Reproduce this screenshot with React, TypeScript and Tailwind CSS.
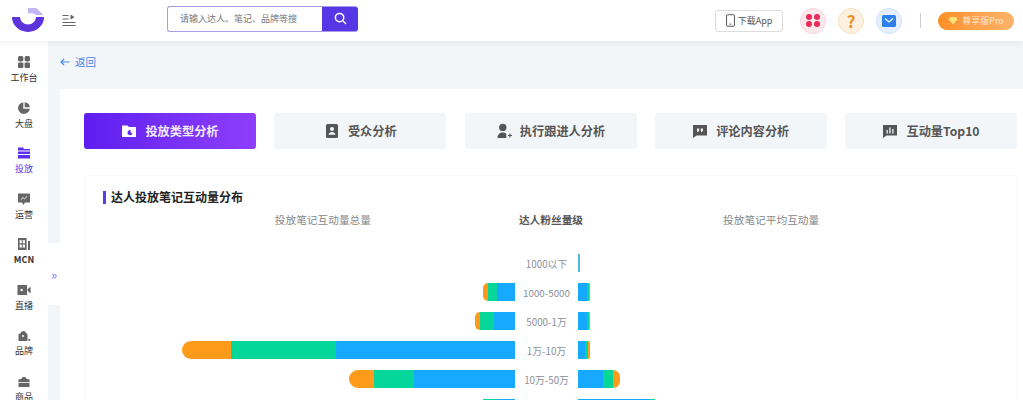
const font = { fontFamily: '"Noto Sans CJK SC", "Noto Sans", sans-serif' }

const navItems = [
  { label: '工作台', icon: 'grid' },
  { label: '大盘', icon: 'pie' },
  { label: '投放', icon: 'folder', active: true },
  { label: '运营', icon: 'chat' },
  { label: 'MCN', icon: 'building' },
  { label: '直播', icon: 'video' },
  { label: '品牌', icon: 'brand' },
  { label: '商品', icon: 'bag' },
]

function NavIcon({ name }: { name: string }) {
  const c = 'w-[14px] h-[14px] fill-[#666]'
  if (name === 'grid')
    return (
      <svg viewBox="0 0 14 14" className={c}>
        <rect x="1" y="1" width="5.4" height="5.4" rx="1.6" />
        <rect x="7.6" y="1" width="5.4" height="5.4" rx="1.6" />
        <rect x="1" y="7.6" width="5.4" height="5.4" rx="1.2" />
        <rect x="7.6" y="7.6" width="5.4" height="5.4" rx="1.2" />
      </svg>
    )
  if (name === 'pie')
    return (
      <svg viewBox="0 0 14 14" className={c}>
        <path d="M6.3 1.2v6.5h6.5A5.9 5.9 0 1 1 6.3 1.2z" />
        <path d="M7.7 1.2a5.6 5.6 0 0 1 5.1 5.1H7.7z" />
      </svg>
    )
  if (name === 'folder')
    return (
      <svg viewBox="0 0 14 14" className="w-[14px] h-[14px] fill-[#5b2df0]">
        <path d="M1 1.500h5l1 1.600h6v1.400H1z" />
        <path d="M1 5.500h12v2.400H1zM1 8.900h12v3.600H1z" />
      </svg>
    )
  if (name === 'chat')
    return (
      <svg viewBox="0 0 14 14" className={c}>
        <path d="M1 1.500h12v9H8L6.500 13 5 10.500H1z" />
        <path d="M3.800 7.600l2.200-2 1.500 1.200 2.600-2.400" fill="none" stroke="#fff" strokeWidth="0.9" />
      </svg>
    )
  if (name === 'building')
    return (
      <svg viewBox="0 0 14 14" className={c}>
        <path d="M1 1h8.600v12H1z" />
        <path d="M11 4h2v9h-2z" />
        <path d="M2.600 3.200h5.400v3H2.600zM2.600 7.400h5.400v3H2.600z" fill="#fff" />
        <path d="M4.800 3.200h1v7.200h-1z" />
      </svg>
    )
  if (name === 'video')
    return (
      <svg viewBox="0 0 14 14" className={c}>
        <path d="M0.500 2h9.500v10H0.500z" />
        <path d="M10.600 6l3-2.200v6.400l-3-2.200z" />
        <circle cx="4.600" cy="7" r="1.300" fill="#fff" />
      </svg>
    )
  if (name === 'brand')
    return (
      <svg viewBox="0 0 14 14" className={c}>
        <path d="M1.500 6.500L3.600 5a3 3 0 0 1 5.600 0l1.300 1.500V13h-9z" />
        <circle cx="12.300" cy="11.800" r="1.100" />
        <circle cx="6" cy="8" r="1" fill="#fff" />
      </svg>
    )
  return (
    <svg viewBox="0 0 14 14" className={c}>
      <path d="M1.500 5.200h2.600a3 3 0 0 1 5.800 0h2.600v7.800h-11z" />
      <path d="M1.500 8h11v.8h-11z" fill="#fff" />
    </svg>
  )
}

function TabIcon({ name, active }: { name: string; active?: boolean }) {
  const c = active ? 'w-[16px] h-[16px] fill-white' : 'w-[16px] h-[16px] fill-[#555]'
  if (name === 'type')
    return (
      <svg viewBox="0 0 16 16" className={c}>
        <path d="M1 2.500h5.500l1.500 1.600h7V14H1z" />
        <path d="M9.700 7a2.600 2.600 0 1 0 1.900 3.400A2.400 2.400 0 0 1 9.700 7z" fill="#6a2cf5" />
      </svg>
    )
  if (name === 'aud')
    return (
      <svg viewBox="0 0 16 16" className={c}>
        <path d="M3.500 1h9A1.500 1.500 0 0 1 14 2.500v11a1.500 1.500 0 0 1-1.500 1.500h-9A1.500 1.500 0 0 1 2 13.500v-11A1.500 1.500 0 0 1 3.500 1z" />
        <circle cx="8" cy="6" r="2" fill="#f3f6f9" />
        <path d="M4.500 11.800c.4-2 1.900-2.800 3.500-2.800s3.100.8 3.500 2.800z" fill="#f3f6f9" />
      </svg>
    )
  if (name === 'person')
    return (
      <svg viewBox="0 0 16 16" className={c}>
        <circle cx="6.800" cy="4.400" r="3.700" />
        <path d="M1.500 15c0-3.600 2.300-5.500 5.300-5.500 1.500 0 2.700.4 3.500 1.200V15z" />
        <path d="M12 12h1.400v-1.400h1.100V12h1.400v1.100h-1.400v1.400h-1.100v-1.400H12z" />
      </svg>
    )
  if (name === 'quote')
    return (
      <svg viewBox="0 0 16 16" className={c}>
        <path d="M1 2h14v10.500H4.500L1 15z" />
        <path d="M5 5.500h2.200v2.300L6 9H5l.6-1.300H5zM8.800 5.500H11v2.300L9.800 9h-1l.6-1.300h-.6z" fill="#f3f6f9" />
      </svg>
    )
  return (
    <svg viewBox="0 0 16 16" className={c}>
      <path d="M1 2h14v10.500H4.500L1 15z" />
      <path d="M4.500 7h1.300v3.500H4.500zM7.300 4.500h1.300v6H7.300zM10.200 6h1.300v4.500h-1.300z" fill="#f3f6f9" />
    </svg>
  )
}

const tabs = [
  { label: '投放类型分析', icon: 'type', active: true },
  { label: '受众分析', icon: 'aud' },
  { label: '执行跟进人分析', icon: 'person' },
  { label: '评论内容分析', icon: 'quote' },
  { label: '互动量Top10', icon: 'bars' },
]

// widths in px: left is orange / green / blue, right is blue / green / orange
const rows = [
  { label: '1000以下', left: [0, 0, 0], right: [2, 0, 0] },
  { label: '1000-5000', left: [5, 9, 18], right: [9, 2, 1] },
  { label: '5000-1万', left: [5, 14, 21], right: [9, 2, 1] },
  { label: '1万-10万', left: [49, 105, 179], right: [7, 3, 2] },
  { label: '10万-50万', left: [25, 40, 101], right: [25, 10, 7] },
  { label: '', left: [0, 14, 18], right: [72, 5, 0] },
]

function Segment({ width, color }: { width: number; color: string }) {
  return <div className={`h-full shrink-0 ${color}`} style={{ width }} />
}

export default function App() {
  return (
    <div className="w-[1023px] h-[400px] overflow-hidden flex flex-col bg-[#f3f6f9] text-[#333]" style={font}>
      {/* Header */}
      <header className="relative z-20 h-[41px] shrink-0 bg-white shadow-[0_1px_8px_rgba(0,0,0,0.08)] flex items-center">
        <div className="w-[62px] shrink-0 pl-[12px] mb-[1px]">
          <svg viewBox="0 0 32 24" className="w-[32px] h-[24px]">
            <path d="M0 9a16 15 0 0 0 32 0h-8a8 7.500 0 0 1-16 0z" fill="#5b34dc" />
            <path d="M16 0h8l7.500 7h-7.500a8 7 0 0 0-8-1.500z" fill="#c4b5f5" />
          </svg>
        </div>
        <svg viewBox="0 0 14 13" className="w-[14px] h-[13px] shrink-0 mb-[1px]" stroke="#666" strokeWidth="1.100">
          <path d="M0.500 1.500h6M0.500 5h6M0.500 8.500h13M0.500 11.500h13" fill="none" />
          <path d="M8.500 0.500l4 2.600-4 2.600z" fill="#666" stroke="none" />
        </svg>
        <div className="ml-[91px] mb-[4px] w-[191px] h-[26px] flex rounded-[3px] overflow-hidden border border-r-0 border-[#a99be8]">
          <div className="flex-1 flex items-center pl-[12px] text-[9px] text-[#777]">请输入达人、笔记、品牌等搜</div>
          <div className="w-[36px] bg-[#5637e6] flex items-center justify-center">
            <svg viewBox="0 0 14 14" className="w-[13px] h-[13px]" fill="none" stroke="#fff" strokeWidth="1.600">
              <circle cx="6" cy="6" r="4.500" />
              <path d="M9.500 9.500l3.500 3.500" />
            </svg>
          </div>
        </div>
        <div className="ml-[357px] w-[68px] h-[22px] border border-[#ddd] rounded-[3px] flex items-center justify-center gap-[3px] text-[9px] text-[#555]">
          <svg viewBox="0 0 10 14" className="w-[9px] h-[13px]" fill="none" stroke="#444" strokeWidth="1">
            <rect x="0.600" y="0.600" width="8.800" height="12.800" rx="1.200" />
            <path d="M4 11h2" />
          </svg>
          下载App
        </div>
        <div className="ml-[17px] flex gap-[12px]">
          <div className="w-[26px] h-[26px] rounded-full bg-[#fde8ec] border border-[#f8d5dc] flex items-center justify-center">
            <div className="grid grid-cols-2 gap-[1.500px]">
              <div className="w-[6px] h-[6px] rounded-full bg-[#ee2a55]" />
              <div className="w-[6px] h-[6px] rounded-full bg-[#ee2a55]" />
              <div className="w-[6px] h-[6px] rounded-full bg-[#ee2a55]" />
              <div className="w-[6px] h-[6px] rounded-full bg-[#ee2a55]" />
            </div>
          </div>
          <div className="w-[26px] h-[26px] rounded-full bg-[#fdf0e0] border border-[#fbdfbd] flex items-center justify-center text-[17px] leading-none font-bold text-[#f08f1e]">?</div>
          <div className="w-[26px] h-[26px] rounded-full bg-[#e6effd] border border-[#cfe0fb] flex items-center justify-center">
            <svg viewBox="0 0 14 12" className="w-[14px] h-[12px]">
              <rect width="14" height="12" rx="1.500" fill="#2f80ed" />
              <path d="M3 3.500l4 3.500 4-3.500" fill="none" stroke="#fff" strokeWidth="1.200" />
            </svg>
          </div>
        </div>
        <div className="ml-[18px] w-px h-[15px] bg-[#ccc]" />
        <div className="ml-[17px] w-[76px] h-[18px] rounded-full bg-gradient-to-r from-[#fd8f24] to-[#fdb36a] flex items-center justify-center gap-[4px] text-[9px] text-[#fde7cf]">
          <svg viewBox="0 0 10 9" className="w-[10px] h-[9px]">
            <path d="M5 8.500L0.500 3.500 2 1h6l1.500 2.500z" fill="#ffe27a" />
          </svg>
          尊享版Pro
        </div>
      </header>

      <div className="relative flex flex-1 min-h-0">
        {/* Sidebar */}
        <nav className="w-[48px] shrink-0 bg-white flex flex-col items-center pt-[14px] gap-[16.500px]">
          {navItems.map((item) => (
            <div key={item.label} className="flex flex-col items-center gap-[2px]">
              <NavIcon name={item.icon} />
              <span className={`text-[9px] leading-[13px] ${item.active ? 'text-[#5b2df0]' : 'text-[#333]'} ${item.label === 'MCN' ? 'font-bold' : ''}`}>
                {item.label}
              </span>
            </div>
          ))}
        </nav>

        {/* Collapse handle */}
        <div className="absolute left-[48px] top-[202px] w-[12px] h-[62px] bg-white flex items-center justify-center text-[13px] leading-none text-[#8d80f0]">
          »
        </div>

        <main className="flex-1 min-w-0 pl-[12px] flex flex-col">
          <div className="h-[48px] shrink-0 flex items-center gap-[5px] text-[10.500px] text-[#4a86e8] pb-[6px]">
            <svg viewBox="0 0 10 8" className="w-[10px] h-[8px]" fill="none" stroke="#4a86e8" strokeWidth="1.100">
              <path d="M9.500 4H1M4 1L1 4l3 3" />
            </svg>
            返回
          </div>

          <section className="flex-1 bg-white pl-[24px] pt-[24px] overflow-hidden">
            <div className="flex gap-[18.250px]">
              {tabs.map((tab) => (
                <div
                  key={tab.label}
                  className={`w-[172px] h-[36px] shrink-0 rounded-[3px] flex items-center justify-center gap-[8px] text-[12.200px] font-semibold ${
                    tab.active ? 'bg-gradient-to-r from-[#5f1cf0] to-[#8f3dfc] text-[#f1e9ff]' : 'bg-[#f3f6f9] text-[#555]'
                  }`}
                >
                  <TabIcon name={tab.icon} active={tab.active} />
                  {tab.label}
                </div>
              ))}
            </div>

            <div className="ml-px mt-[26px] w-[932px] h-[300px] border border-[#f9fafc] pt-[14px]">
              <div className="pl-[17px] flex items-center gap-[5px]">
                <div className="w-[3px] h-[13px] bg-[#5b3be8]" />
                <h3 className="text-[12px] leading-[14px] font-bold text-[#222]">达人投放笔记互动量分布</h3>
              </div>

              <div className="mt-[9px] flex text-[10.700px] leading-[14px] text-[#888]">
                <div className="w-[429px] pr-[144px] text-right">投放笔记互动量总量</div>
                <div className="w-[72px] text-center font-semibold text-[#555]">达人粉丝量级</div>
                <div className="ml-[136px]">投放笔记平均互动量</div>
              </div>

              <div className="mt-[27px] flex flex-col gap-[11px]">
                {rows.map((row) => (
                  <div key={row.label} className="flex items-center h-[18px]">
                    <div className="w-[429px] h-full flex justify-end">
                      <Segment width={row.left[0]} color="rounded-l-[9px] bg-[#ff9b1a]" />
                      <Segment width={row.left[1]} color="bg-[#05d69a]" />
                      <Segment width={row.left[2]} color="bg-[#17a8ff]" />
                    </div>
                    <div className="w-[63px] pt-[1px] text-center text-[9.800px] leading-[14px] text-[#8a8f99] whitespace-nowrap">{row.label}</div>
                    <div className="h-full flex">
                      <Segment width={row.right[0]} color={row.label === '1000以下' ? 'bg-[#4fb8e8]' : 'bg-[#17a8ff]'} />
                      <Segment width={row.right[1]} color="bg-[#05d69a]" />
                      <Segment width={row.right[2]} color="rounded-r-[9px] bg-[#ff9b1a]" />
                    </div>
                  </div>
                ))}
              </div>
            </div>
          </section>
        </main>
      </div>
    </div>
  )
}
